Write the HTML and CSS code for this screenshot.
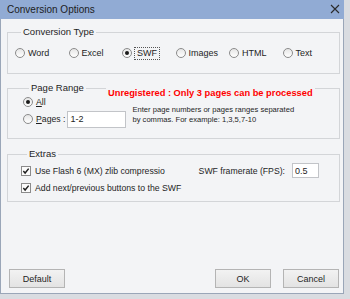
FILE: index.html
```html
<!DOCTYPE html>
<html lang="en">
<head>
    <meta charset="UTF-8">
    <title>Conversion Options</title>
    <link rel="stylesheet" href="styles.css">
</head>
<body>
    <div class="window">
        <div class="titlebar">
            <span class="title">Conversion Options</span>
            <svg class="close" width="10" height="10" viewBox="0 0 10 10">
                <path d="M1 1 L9 9 M9 1 L1 9" stroke="#2b2b2b" stroke-width="1.1" fill="none"/>
            </svg>
        </div>

        <div class="content">
            <fieldset class="group type-group">
                <legend>Conversion Type</legend>
                <div class="type-row">
                    <label class="opt"><span class="radio"></span>Word</label>
                    <label class="opt"><span class="radio"></span>Excel</label>
                    <label class="opt"><span class="radio checked"></span><span class="focus">SWF</span></label>
                    <label class="opt"><span class="radio"></span>Images</label>
                    <label class="opt"><span class="radio"></span>HTML</label>
                    <label class="opt"><span class="radio"></span>Text</label>
                </div>
            </fieldset>

            <fieldset class="group range-group">
                <legend>Page Range</legend>
                <span class="warning">Unregistered : Only 3 pages can be processed</span>
                <div class="range-body">
                    <div class="range-opts">
                        <label class="opt"><span class="radio checked"></span><u>A</u>ll</label>
                        <div class="pages-row">
                            <label class="opt"><span class="radio"></span><u>P</u>ages :</label>
                            <input class="field pages-field" type="text" value="1-2">
                        </div>
                    </div>
                    <p class="hint">Enter page numbers or pages ranges separated<br>by commas. For example: 1,3,5,7-10</p>
                </div>
            </fieldset>

            <fieldset class="group extras-group">
                <legend>Extras</legend>
                <div class="extras-row">
                    <label class="opt"><span class="check"><svg width="8" height="8" viewBox="0 0 9 9"><path d="M1.5 4.5 L3.5 6.8 L7.5 1.8" stroke="#1e1e1e" stroke-width="1.6" fill="none"/></svg></span>Use Flash 6 (MX) zlib compressio</label>
                    <div class="fps">
                        <span>SWF framerate (FPS):</span>
                        <input class="field fps-field" type="text" value="0.5">
                    </div>
                </div>
                <div class="extras-row">
                    <label class="opt"><span class="check"><svg width="8" height="8" viewBox="0 0 9 9"><path d="M1.5 4.5 L3.5 6.8 L7.5 1.8" stroke="#1e1e1e" stroke-width="1.6" fill="none"/></svg></span>Add next/previous buttons to the SWF</label>
                </div>
            </fieldset>
        </div>

        <div class="footer">
            <button class="btn">Default</button>
            <div class="footer-right">
                <button class="btn">OK</button>
                <button class="btn">Cancel</button>
            </div>
        </div>
    </div>
</body>
</html>
```

FILE: styles.css
```css
body {
    margin: 0;
    padding: 0;
    width: 350px;
    height: 299px;
    overflow: hidden;
    background-color: #d9dce1;
    font-family: "Liberation Sans", Arial, sans-serif;
    font-size: 8.7px;
    color: #1e1e1e;
}
.window {
    width: 344px;
    height: 294px;
    box-sizing: border-box;
    border: 1px solid #9aa6b8;
    border-top: none;
    background-color: #f3f4f6;
    display: flex;
    flex-direction: column;
}
.titlebar {
    height: 19px;
    background-color: #91abd4;
    display: flex;
    align-items: center;
    justify-content: space-between;
    padding: 0 4px 0 7px;
    margin: 0 -1px;
}
.title {
    font-size: 10px;
    color: #1c1c1c;
}
.close {
    display: block;
    margin-top: -2px;
}
.content {
    padding: 7px 3px 0 6px;
    display: flex;
    flex-direction: column;
}
.group {
    margin: 0;
    padding: 0;
    border: 1px solid #d3d5d8;
    position: relative;
}
.group legend {
    margin-left: 6px;
    padding: 0 2px;
    line-height: 12px;
    font-size: 9.5px;
}
.opt {
    display: flex;
    align-items: center;
    white-space: nowrap;
}
.radio {
    width: 8px;
    height: 8px;
    border: 1px solid #8b8b8b;
    border-radius: 50%;
    background: linear-gradient(#e6e6e6, #ffffff);
    margin-right: 3px;
    display: flex;
    align-items: center;
    justify-content: center;
    flex-shrink: 0;
}
.radio.checked::after {
    content: "";
    width: 4px;
    height: 4px;
    border-radius: 50%;
    background-color: #1a1a1a;
}
.focus {
    border: 1px dotted #555;
    padding: 0 2px;
    margin-left: -1px;
    line-height: 11px;
}
.check {
    width: 8px;
    height: 8px;
    border: 1px solid #8b8b8b;
    background-color: #fbfbfb;
    margin-right: 4px;
    display: flex;
    align-items: center;
    justify-content: center;
}
.check svg {
    display: block;
}
.type-group {
    padding: 8px 0 13px 7px;
}
.type-row {
    display: grid;
    grid-template-columns: repeat(6, 53.5px);
    height: 14px;
    align-items: center;
    font-size: 9px;
}
.range-group {
    margin-top: 8px;
    padding: 1px 0 10px 15px;
}
.warning {
    position: absolute;
    top: -7px;
    left: 98px;
    padding: 0 2px;
    background-color: #f3f4f6;
    color: #ff0000;
    font-weight: bold;
    font-size: 9.3px;
    line-height: 12px;
    white-space: nowrap;
}
.range-body {
    display: flex;
    align-items: flex-end;
}
.range-opts {
    display: flex;
    flex-direction: column;
    gap: 1px;
}
.range-opts > .opt {
    height: 14px;
}
.pages-row {
    display: flex;
    align-items: center;
    height: 18px;
}
.field {
    box-sizing: border-box;
    border: 1px solid #c2c4c8;
    background-color: #ffffff;
    font-family: "Liberation Sans", Arial, sans-serif;
    font-size: 9px;
    color: #1e1e1e;
    padding: 0 2px;
    margin: 0;
    outline: none;
}
.pages-field {
    width: 59px;
    height: 17px;
    margin-left: 2px;
}
.hint {
    margin: 0 0 3px 6px;
    font-size: 7.6px;
    line-height: 10px;
    white-space: nowrap;
}
.extras-group {
    margin-top: 9px;
    padding: 2px 20px 5px 13px;
}
.extras-row {
    display: flex;
    align-items: center;
    justify-content: space-between;
    height: 17px;
}
.fps {
    display: flex;
    align-items: center;
    gap: 7px;
}
.fps-field {
    width: 27px;
    height: 15px;
}
.footer {
    margin-top: auto;
    padding: 0 4px 5px 8px;
    display: flex;
    justify-content: space-between;
}
.footer-right {
    display: flex;
    gap: 12px;
}
.btn {
    width: 56px;
    height: 19px;
    border: 1px solid #b4b4b4;
    background: linear-gradient(#f2f2f2, #e3e3e3);
    font-family: "Liberation Sans", Arial, sans-serif;
    font-size: 9px;
    color: #1e1e1e;
    padding: 0;
}
```
